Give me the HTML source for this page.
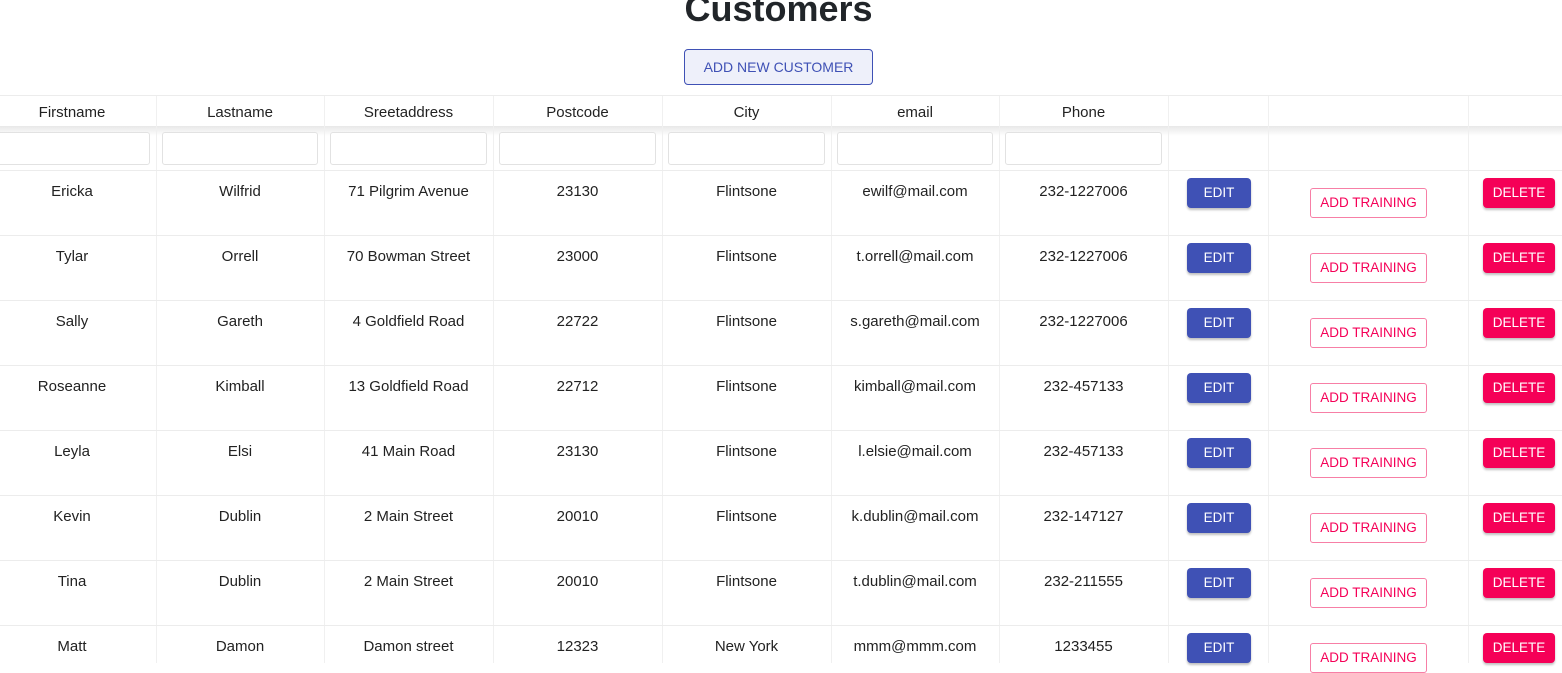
<!DOCTYPE html>
<html><head><style>
body{margin:0;width:1562px;height:663px;overflow:hidden;background:#fff;font-family:"Liberation Sans",sans-serif;color:#222;position:relative}
.a{position:absolute}
h1{position:absolute;left:0;width:1557px;text-align:center;top:-12px;margin:0;font-size:36px;font-weight:bold;color:#212529}
.anc{left:684px;top:49px;width:187px;height:34px;border:1px solid #3f51b5;border-radius:4px;background:#eef0fa;color:#3f51b5;font-size:14px;line-height:34px;text-align:center}
.vl{position:absolute;top:96px;width:1px;height:567px;background:#f0f0f0}
.hl{position:absolute;left:0;width:1562px;height:1px;background:#ececec}
.c{position:absolute;text-align:center;font-size:15px}
.inp{position:absolute;top:132px;height:31px;border:1px solid #e2e2e2;border-radius:3px;background:#fff}
.edit{position:absolute;left:1187px;width:64px;height:30px;background:#3f51b5;color:#fff;border-radius:4px;font-size:13.5px;line-height:29px;text-align:center;box-shadow:0 2px 2px rgba(0,0,0,.25)}
.del{position:absolute;left:1483px;width:72px;height:30px;background:#f50057;color:#fff;border-radius:4px;font-size:13.5px;line-height:29px;text-align:center;box-shadow:0 2px 2px rgba(0,0,0,.25)}
.tr{position:absolute;left:1310px;width:115px;height:28px;border:1px solid #f77fa6;color:#f50057;border-radius:3px;font-size:13.5px;line-height:27px;text-align:center}
</style></head><body>
<h1>Customers</h1>
<div class="a anc">ADD NEW CUSTOMER</div>
<div class="hl" style="top:95px"></div>
<div class="a" style="left:0;top:126px;width:1562px;height:10px;background:linear-gradient(#e8e8e8,#fff)"></div>
<div id="g"></div>
<script>
var xs=[-12,156,324,493,662,831,999,1168,1268,1468,1562];
var h='';
for(var i=1;i<xs.length-1;i++)h+='<div class="vl" style="left:'+xs[i]+'px"></div>';
var hd=['Firstname','Lastname','Sreetaddress','Postcode','City','email','Phone'];
for(var i=0;i<7;i++){h+='<div class="c" style="left:'+xs[i]+'px;width:'+(xs[i+1]-xs[i])+'px;top:104px">'+hd[i]+'</div>';
h+='<div class="inp" style="left:'+(xs[i]+6)+'px;width:'+(xs[i+1]-xs[i]-14)+'px"></div>';}
var rows=[['Ericka','Wilfrid','71 Pilgrim Avenue','23130','Flintsone','ewilf@mail.com','232-1227006'],
['Tylar','Orrell','70 Bowman Street','23000','Flintsone','t.orrell@mail.com','232-1227006'],
['Sally','Gareth','4 Goldfield Road','22722','Flintsone','s.gareth@mail.com','232-1227006'],
['Roseanne','Kimball','13 Goldfield Road','22712','Flintsone','kimball@mail.com','232-457133'],
['Leyla','Elsi','41 Main Road','23130','Flintsone','l.elsie@mail.com','232-457133'],
['Kevin','Dublin','2 Main Street','20010','Flintsone','k.dublin@mail.com','232-147127'],
['Tina','Dublin','2 Main Street','20010','Flintsone','t.dublin@mail.com','232-211555'],
['Matt','Damon','Damon street','12323','New York','mmm@mmm.com','1233455']];
for(var r=0;r<rows.length;r++){var y=170+r*65;
h+='<div class="hl" style="top:'+y+'px"></div>';
for(var i=0;i<7;i++)h+='<div class="c" style="left:'+xs[i]+'px;width:'+(xs[i+1]-xs[i])+'px;top:'+(y+13)+'px">'+rows[r][i]+'</div>';
h+='<div class="edit" style="top:'+(y+8)+'px">EDIT</div><div class="tr" style="top:'+(y+18)+'px">ADD TRAINING</div><div class="del" style="top:'+(y+8)+'px">DELETE</div>';}
document.getElementById('g').innerHTML=h;
</script>
</body></html>
